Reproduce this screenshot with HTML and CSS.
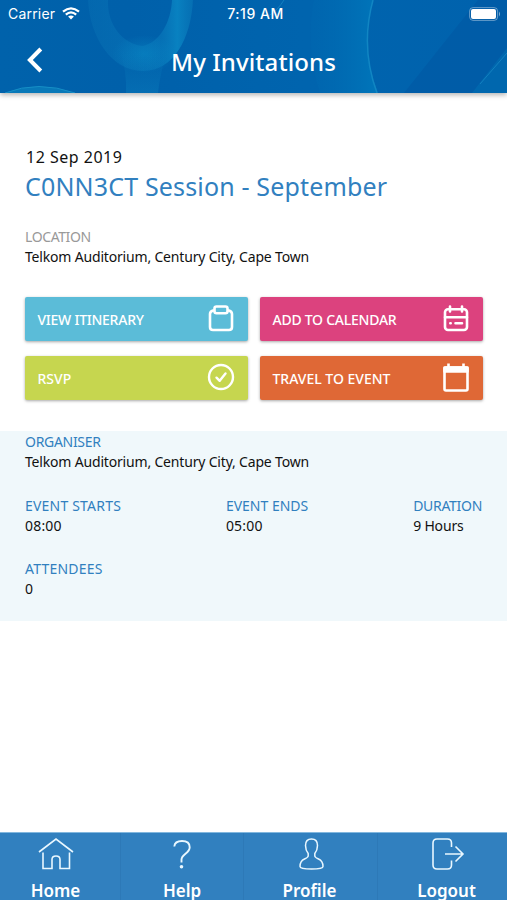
FILE: index.html
```html
<!DOCTYPE html>
<html lang="en">

<head>
    <meta charset="UTF-8">
    <meta name="viewport" content="width=device-width, initial-scale=1.0">
    <title>My Invitations</title>
    <link rel="stylesheet" href="styles.css">
</head>

<body>

    <!-- header -->
    <header class="header">
        <svg class="header-art" width="507" height="93" viewBox="0 0 507 93">
            <defs>
                <linearGradient id="base" x1="0" x2="1">
                    <stop offset="0" stop-color="#0062ab"/>
                    <stop offset=".25" stop-color="#0060aa"/>
                    <stop offset=".6" stop-color="#0064ae"/>
                    <stop offset="1" stop-color="#0062ad"/>
                </linearGradient>
                <linearGradient id="ring" x1="0" x2="1">
                    <stop offset="0" stop-color="#0c78b8" stop-opacity=".3"/>
                    <stop offset=".7" stop-color="#0b7fbf" stop-opacity=".5"/>
                    <stop offset=".85" stop-color="#0b8cc8" stop-opacity=".75"/>
                    <stop offset="1" stop-color="#0b7cbb" stop-opacity=".5"/>
                </linearGradient>
                <linearGradient id="band" x1="0" x2="1">
                    <stop offset="0" stop-color="#0069b1" stop-opacity=".3"/>
                    <stop offset="1" stop-color="#0076ba"/>
                </linearGradient>
                <radialGradient id="glow">
                    <stop offset="0" stop-color="#0888c5" stop-opacity=".55"/>
                    <stop offset="1" stop-color="#0888c5" stop-opacity="0"/>
                </radialGradient>
                <linearGradient id="stem" x1="0" x2="0" y1="0" y2="1">
                    <stop offset="0" stop-color="#0a7dbd" stop-opacity="0"/>
                    <stop offset="1" stop-color="#0a7dbd" stop-opacity=".45"/>
                </linearGradient>
            </defs>
            <rect width="507" height="93" fill="url(#base)"/>
            <path d="M88 0C90 38 112 71 143 71S191 38 193 0H172C171 22 160 42 143 46C122 44 107 24 108 0Z" fill="url(#ring)"/>
            <ellipse cx="144" cy="54" rx="32" ry="19" fill="url(#glow)"/>
            <path d="M120 50H168Q160 72 158 93H126Q127 72 120 50Z" fill="url(#stem)"/>
            <path d="M5 93Q38 80 75 93Z" fill="#0878b8"/>
            <path d="M5 93Q38 80 75 93" fill="none" stroke="#168fc6"/>
            <path d="M314 0Q305 45 320 93H378Q359 45 373 0Z" fill="url(#band)"/>
            <path d="M373 0Q360 47 377 93" fill="none" stroke="#1186c3" stroke-width="1.5"/>
            <path d="M478 0L404 93H507V0Z" fill="#0055a2" opacity=".5"/>
            <path d="M507 48L472 93H507Z" fill="#0075b9" opacity=".45"/>
            <path d="M507 53L480 84M284 0Q278 10 267 17" fill="none" stroke="#1b8bc7" opacity=".7"/>
        </svg>
        <div class="status">
            <div class="carrier">
                <span>Carrier</span>
                <svg width="18" height="13" viewBox="0 0 18 13" fill="none" stroke="#fff" stroke-width="2.2">
                    <path d="M1 4.6Q9 -2 17 4.6M3.8 7.6Q9 3.2 14.2 7.6"/>
                    <path d="M6.1 9.5Q9 7.4 11.9 9.5L9 12.6Z" fill="#fff" stroke="none"/>
                </svg>
            </div>
            <span class="clock">7:19 AM</span>
            <svg class="battery" width="32" height="14" viewBox="0 0 32 14">
                <rect x=".6" y=".6" width="28" height="12.8" rx="3.5" fill="none" stroke="#fff" opacity=".4"/>
                <rect x="2" y="2" width="25" height="10" rx="2" fill="#fff"/>
                <path d="M30 4.5Q32 7 30 9.5Z" fill="#fff" opacity=".5"/>
            </svg>
        </div>
        <div class="titlebar">
            <svg class="back" width="18" height="26" viewBox="0 0 18 26" fill="none" stroke="#fff" stroke-width="4">
                <path d="M14.8 2L3.9 13L14.8 24"/>
            </svg>
            <h1>My Invitations</h1>
        </div>
    </header>

    <!-- event -->
    <main>
        <section class="event">
            <p class="date">12 Sep 2019</p>
            <h2>C0NN3CT Session - September</h2>
            <p class="label grey">LOCATION</p>
            <p class="value place">Telkom Auditorium, Century City, Cape Town</p>
            <div class="buttons">
                <button class="btn blue">
                    <span class="tight">VIEW ITINERARY</span>
                    <svg width="28" height="30" viewBox="0 0 28 30" fill="none" stroke="#fff" stroke-width="2.6" stroke-linejoin="round">
                        <path d="M7.5 6.5H6Q3 7.5 3 10V23Q3 26 6 26H22Q25 26 25 23V10Q25 7.5 22 6.5H20.5"/>
                        <rect x="7.5" y="2.5" width="13" height="6.7" rx="2"/>
                    </svg>
                </button>
                <button class="btn pink">
                    <span class="tight">ADD TO CALENDAR</span>
                    <svg width="28" height="30" viewBox="0 0 28 30" fill="none" stroke="#fff" stroke-width="2.6" stroke-linecap="round">
                        <rect x="3" y="5.3" width="22" height="20.7" rx="3"/>
                        <path d="M3 13.2H25M8 2.5V7.5M20 2.5V7.5"/>
                        <path d="M8.3 19.3H8.7M13.5 19.3H20"/>
                    </svg>
                </button>
                <button class="btn green">
                    <span>RSVP</span>
                    <svg width="28" height="30" viewBox="0 0 28 30" fill="none" stroke="#fff" stroke-width="2.4" stroke-linecap="round" stroke-linejoin="round">
                        <circle cx="14" cy="14" r="12"/>
                        <path d="M9.5 14.7L12.7 17.8L18.5 10.5"/>
                    </svg>
                </button>
                <button class="btn orange">
                    <span>TRAVEL TO EVENT</span>
                    <svg width="28" height="30" viewBox="0 0 28 30" fill="none" stroke="#fff" stroke-width="2.6" stroke-linejoin="round">
                        <rect x="2.5" y="4.5" width="23" height="23" rx="1.5"/>
                        <path d="M2.5 4.5H25.5V8.5H2.5Z" fill="#fff"/>
                        <path d="M6.5 .5V5M21.5 .5V5"/>
                    </svg>
                </button>
            </div>
        </section>

        <section class="details">
            <div class="field">
                <p class="label narrow">ORGANISER</p>
                <p class="value place">Telkom Auditorium, Century City, Cape Town</p>
            </div>
            <div class="times">
                <div class="field">
                    <p class="label wide">EVENT STARTS</p>
                    <p class="value wide">08:00</p>
                </div>
                <div class="field">
                    <p class="label">EVENT ENDS</p>
                    <p class="value wide">05:00</p>
                </div>
                <div class="field">
                    <p class="label narrow">DURATION</p>
                    <p class="value place">9 Hours</p>
                </div>
            </div>
            <div class="field">
                <p class="label wide">ATTENDEES</p>
                <p class="value">0</p>
            </div>
        </section>
    </main>

    <!-- bottom nav -->
    <nav class="tabs">
        <a class="tab home">
            <svg width="36" height="34" viewBox="0 0 36 34" fill="none" stroke="#e9f7ff" stroke-width="1.6">
                <path d="M1 15L18 2L35 15M5 15.5V31.5H14V22.5Q14 19 18 19T22 22.5V31.5H31.5V15.5"/>
            </svg>
            <span>Home</span>
        </a>
        <a class="tab help">
            <svg width="36" height="34" viewBox="0 0 36 34" fill="none" stroke="#e9f7ff" stroke-width="1.9">
                <path d="M10.3 9.5Q10.8 4 18 4Q25.7 4 25.7 10.3Q25.7 13.5 21.5 16.8Q17.5 20 17.5 22.5V25.5"/>
                <circle cx="17.5" cy="29.8" r="1.8" fill="#e9f7ff" stroke="none"/>
            </svg>
            <span>Help</span>
        </a>
        <a class="tab profile">
            <svg width="36" height="34" viewBox="0 0 36 34" fill="none" stroke="#e9f7ff" stroke-width="1.5">
                <path d="M19.5 2Q25.5 2 25.5 8.5Q25.5 13 22.8 16.5V19Q23 20.5 26.5 22Q31 24 31 29.5Q31 32 19.5 32T8 29.5Q8 24 12.5 22Q16 20.5 16.2 19V16.5Q13.5 13 13.5 8.5Q13.5 2 19.5 2Z"/>
            </svg>
            <span>Profile</span>
        </a>
        <a class="tab logout">
            <svg width="36" height="34" viewBox="0 0 36 34" fill="none" stroke="#e9f7ff" stroke-width="1.6">
                <path d="M22.5 10V6Q22.5 2 18.5 2H8Q4 2 4 6V28Q4 32 8 32H18.5Q22.5 32 22.5 28V23.5M16 17H34M26.5 9.5L34 17L26.5 24.5"/>
            </svg>
            <span>Logout</span>
        </a>
    </nav>

</body>

</html>
```
FILE: styles.css
```css
:root {
    --main-color: #3180bf;
}

* {
    box-sizing: border-box;
}

body {
    margin: 0;
    height: 900px;
    display: flex;
    flex-direction: column;
    overflow: hidden;
    background: white;
    color: #111;
    font-family: "Noto Sans", sans-serif;
}

h1, h2, p {
    margin: 0;
    font-weight: 400;
    white-space: nowrap;
}

/* header */
.header {
    position: relative;
    height: 93px;
    flex: none;
    color: white;
    box-shadow: 0 2px 5px rgba(0, 0, 0, 0.3);
}

/* artwork behind the header content */
.header-art {
    position: absolute;
    top: 0;
    left: 0;
}

.status {
    position: relative;
    display: grid;
    grid-template-columns: 1fr auto 1fr;
    align-items: center;
    height: 27px;
    padding: 0 6px 0 8px;
    font-family: Inter, sans-serif;
    font-size: 14px;
}

.carrier {
    display: flex;
    align-items: center;
    gap: 7px;
    letter-spacing: 0.2px;
}

.clock {
    padding-left: 2px;
    font-weight: 500;
    letter-spacing: 0.5px;
}

.battery {
    justify-self: end;
}

.titlebar {
    position: relative;
    display: grid;
    grid-template-columns: 60px 1fr 60px;
    align-items: center;
    height: 66px;
}

.back {
    margin: 0 0 0 26px;
}

.titlebar h1 {
    padding-top: 3px;
    font-size: 24px;
    font-weight: 500;
    letter-spacing: 0.1px;
    text-align: center;
}

/* event */
.event {
    padding: 54px 24px 31px 25px;
}

.date {
    padding-left: 1px;
    font-size: 16px;
    line-height: 20px;
    letter-spacing: 0.5px;
}

.event h2 {
    margin: 4px 0 26px;
    font-size: 25px;
    line-height: 30px;
    letter-spacing: 0.16px;
    color: var(--main-color);
}

.label {
    font-size: 14px;
    line-height: 20px;
    color: var(--main-color);
}

.grey {
    color: #999;
    letter-spacing: -0.4px;
}

.value {
    font-size: 14px;
    line-height: 19px;
}

.place {
    letter-spacing: -0.18px;
}

.narrow {
    letter-spacing: -0.3px;
}

.wide {
    letter-spacing: 0.2px;
}

.buttons {
    display: grid;
    grid-template-columns: 223px 223px;
    justify-content: space-between;
    row-gap: 15px;
    margin-top: 31px;
}

.btn {
    display: flex;
    align-items: center;
    justify-content: space-between;
    height: 44px;
    padding: 0 13.5px 0 12.5px;
    border: none;
    border-radius: 2px;
    color: white;
    font-family: inherit;
    font-size: 14px;
    font-weight: 500;
    white-space: nowrap;
    box-shadow: 0 1px 3px rgba(0, 0, 0, 0.35);
}

.tight {
    letter-spacing: -0.25px;
}

.blue { background: #5bbcd8; }
.pink { background: #dc427e; }
.green { background: #c6d64f; }
.orange { background: #df6836; }

/* details */
.details {
    display: flex;
    flex-direction: column;
    gap: 24.5px;
    height: 190px;
    padding: 1px 25px;
    background: #f0f8fb;
}

.times {
    display: flex;
    justify-content: space-between;
}

/* bottom nav */
.tabs {
    display: grid;
    grid-template-columns: 121px 123px 134px 129px;
    height: 68px;
    margin-top: auto;
    background: var(--main-color);
    border-top: 1px solid #82b7de;
}

.tab {
    display: flex;
    flex-direction: column;
    align-items: center;
    padding-top: 4px;
    color: white;
    font-size: 17px;
    font-weight: 600;
    line-height: 18px;
    border-right: 1px solid #2d79b7;
}

.tab svg {
    margin-bottom: 11px;
    flex: none;
}

.home {
    padding-right: 9px;
}

.profile {
    padding-right: 2px;
}

.logout {
    padding-left: 8px;
    border-right: none;
}
```
